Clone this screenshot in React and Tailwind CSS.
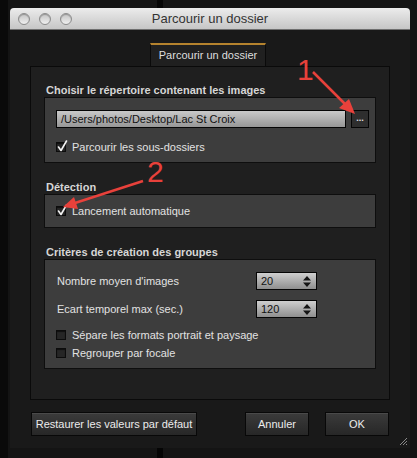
import React from 'react';

const font = { fontFamily: '"Liberation Sans", Arial, sans-serif' };

// case à cocher style Mac sombre
const Check = ({ checked, label }) => (
  <div className="flex items-center h-[14px]">
    <div className="relative w-[10px] h-[10px] bg-[#262626] border border-[#0c0c0c] shadow-[inset_0_1px_1px_rgba(0,0,0,0.6)]">
      {checked && (
        <svg className="absolute left-[0px] top-[-3px]" width="11" height="12" viewBox="0 0 11 12">
          <path d="M1.5 7 L4 10.5 L9.5 1" stroke="#f2f2f2" strokeWidth="1.6" fill="none" strokeLinecap="round" strokeLinejoin="round" />
        </svg>
      )}
    </div>
    <span className="ml-[6px] text-[11px] text-[#e2e2e2] leading-none whitespace-nowrap">{label}</span>
  </div>
);

const Spin = ({ value }) => (
  <div className="w-[61px] h-[18px] flex items-center justify-between border border-[#050505] bg-gradient-to-b from-[#cfcfcf] to-[#8f8f8f] pl-[4px] pr-[5px]">
    <span className="text-[11px] text-[#111] leading-none">{value}</span>
    <svg width="8" height="11" viewBox="0 0 8 11">
      <path d="M4 0 L8 4.5 L0 4.5 Z M0 6.5 L8 6.5 L4 11 Z" fill="#151515" />
    </svg>
  </div>
);

const Group = ({ title, box, children }) => (
  <div>
    <div className="h-[14px] flex items-center text-[11px] font-bold text-[#d6d6d6] pl-[2px] whitespace-nowrap">{title}</div>
    <div className={`bg-[#3d3d3d] border border-[#0e0e0e] ${box}`}>{children}</div>
  </div>
);

const Btn = ({ w, children }) => (
  <div className={`${w} h-[24px] flex items-center justify-center whitespace-nowrap border border-[#080808] bg-gradient-to-b from-[#3b3b3b] to-[#272727] text-[11px] text-[#ececec] shadow-[inset_0_1px_0_rgba(255,255,255,0.08)]`}>
    {children}
  </div>
);

export default function App() {
  return (
    <div
      style={font}
      className="relative w-[417px] h-[458px] overflow-hidden pt-[8px] pl-[10px] bg-[linear-gradient(to_right,#0a0a0a_8px,#141414_8px,#141414_157px,#050505_157px,#050505_163px,#141414_163px)]"
    >
      <div className="relative w-[400px] h-[440px] flex flex-col bg-[#191919] rounded-t-[4px]">
        {/* barre de titre */}
        <div className="h-[22px] grid grid-cols-[1fr_auto_1fr] items-center rounded-t-[4px] bg-gradient-to-b from-[#ececec] to-[#c6c6c6] border-b border-[#6f6f6f]">
          <div className="flex items-center gap-[9px] pl-[8px]">
            {[0, 1, 2].map((i) => (
              <div key={i} className="w-[12px] h-[12px] rounded-full border border-[#8c8c8c] bg-gradient-to-b from-[#c4c4c4] to-[#f0f0f0] shadow-[inset_0_1px_1px_rgba(0,0,0,0.25)]" />
            ))}
          </div>
          <div className="text-[13px] text-[#333] leading-none">Parcourir un dossier</div>
          <div />
        </div>

        <div className="flex flex-col px-[20px]">
          {/* onglet */}
          <div className="mt-[13px] pl-[120px]">
            <div className="w-[116px] h-[23px] flex items-center justify-center bg-[#202020] border-t-2 border-t-[#b5832e] border-x border-x-[#0a0a0a] text-[11px] text-[#dedede]">
              Parcourir un dossier
            </div>
          </div>

          {/* panneau */}
          <div className="h-[334px] bg-[#1f1f1f] border border-[#0a0a0a] px-[13px] pt-[16px] flex flex-col gap-[17px]">
            <Group title="Choisir le répertoire contenant les images" box="h-[66px] pl-[11px] pr-[6px] pt-[12px]">
              <div className="flex items-center gap-[5px]">
                <div className="flex-1 h-[18px] flex items-center border border-[#050505] bg-gradient-to-b from-[#c9c9c9] to-[#979797] pl-[4px] text-[11px] text-[#111]">
                  /Users/photos/Desktop/Lac St Croix
                </div>
                <div className="w-[18px] h-[18px] flex items-end justify-center pb-[4px] border border-[#050505] bg-[#2e2e2e]">
                  <span className="text-[9px] leading-none text-[#e0e0e0] font-bold">...</span>
                </div>
              </div>
              <div className="mt-[12px]">
                <Check checked label="Parcourir les sous-dossiers" />
              </div>
            </Group>

            <Group title="Détection" box="h-[34px] pl-[11px] pt-[9px]">
              <Check checked label="Lancement automatique" />
            </Group>

            <Group title="Critères de création des groupes" box="h-[110px] pl-[12px] pt-[12px]">
              <div className="flex items-center h-[18px]">
                <span className="w-[199px] text-[11px] text-[#e2e2e2]">Nombre moyen d'images</span>
                <Spin value="20" />
              </div>
              <div className="flex items-center h-[18px] mt-[10px]">
                <span className="w-[199px] text-[11px] text-[#e2e2e2]">Ecart temporel max (sec.)</span>
                <Spin value="120" />
              </div>
              <div className="mt-[10px] -ml-[1px] flex flex-col gap-[4px]">
                <Check label="Sépare les formats portrait et paysage" />
                <Check label="Regrouper par focale" />
              </div>
            </Group>
          </div>

          {/* boutons */}
          <div className="mt-[12px] flex items-center pl-[1px]">
            <Btn w="w-[166px]">Restaurer les valeurs par défaut</Btn>
            <div className="flex-1" />
            <div className="flex gap-[16px] pr-[1px]">
              <Btn w="w-[64px]">Annuler</Btn>
              <Btn w="w-[64px]">OK</Btn>
            </div>
          </div>
        </div>

        {/* poignée de redimensionnement */}
        <svg className="absolute right-[2px] bottom-[2px]" width="9" height="9" viewBox="0 0 9 9">
          <path d="M1 8 L8 1 M4 8 L8 4 M7 8 L8 7" stroke="#8a8a8a" strokeWidth="1" />
        </svg>
      </div>

      {/* annotations rouges */}
      <svg className="absolute inset-0 pointer-events-none" width="417" height="458" viewBox="0 0 417 458">
        <g fill="#e8413b" stroke="#e8413b">
          <text x="297" y="80" fontSize="30" fontFamily="Liberation Sans, Arial, sans-serif" stroke="none">1</text>
          <line x1="313" y1="72" x2="347" y2="106" strokeWidth="2.5" />
          <path d="M355 114 L339 108 L349 99 Z" stroke="none" />
          <text x="147" y="182" fontSize="30" fontFamily="Liberation Sans, Arial, sans-serif" stroke="none">2</text>
          <line x1="143" y1="181" x2="75" y2="203" strokeWidth="2.5" />
          <path d="M63 207 L74 197 L78 209 Z" stroke="none" />
        </g>
      </svg>
    </div>
  );
}
